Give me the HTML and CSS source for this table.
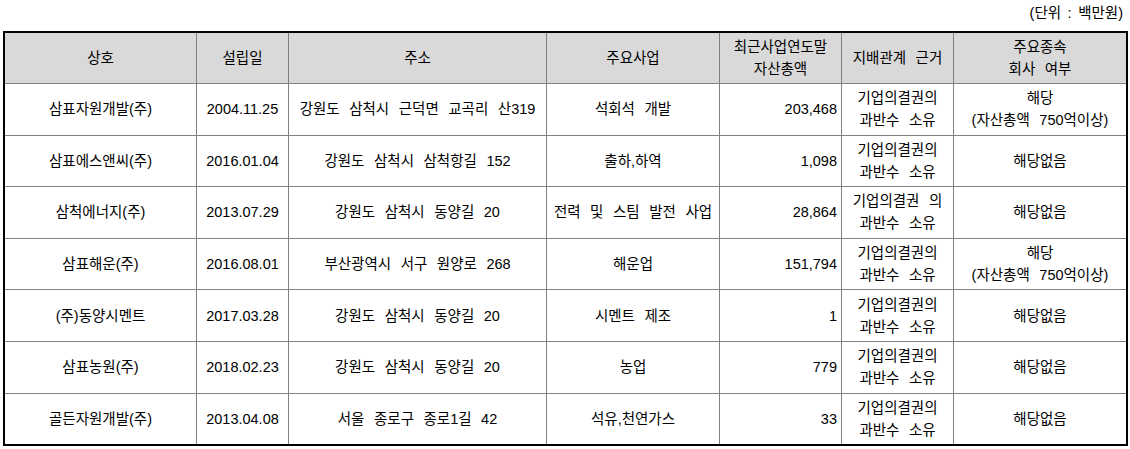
FILE: index.html
```html
<!DOCTYPE html>
<html lang="ko">
<head>
<meta charset="utf-8">
<title>종속회사 현황</title>
<link rel="stylesheet" href="styles.css">
</head>
<body>
<div class="page">
  <div class="unit">(단위 : 백만원)</div>
  <table class="grid">
    <thead>
      <tr class="head">
        <th class="c1">상호</th>
        <th class="c2">설립일</th>
        <th class="c3">주소</th>
        <th class="c4">주요사업</th>
        <th class="c5">최근사업연도말<br>자산총액</th>
        <th class="c6">지배관계 근거</th>
        <th class="c7">주요종속<br>회사 여부</th>
      </tr>
    </thead>
    <tbody>
      <tr>
        <td>삼표자원개발(주)</td>
        <td>2004.11.25</td>
        <td>강원도 삼척시 근덕면 교곡리 산319</td>
        <td>석회석 개발</td>
        <td class="num">203,468</td>
        <td>기업의결권의<br>과반수 소유</td>
        <td>해당<br>(자산총액 750억이상)</td>
      </tr>
      <tr>
        <td>삼표에스앤씨(주)</td>
        <td>2016.01.04</td>
        <td>강원도 삼척시 삼척항길 152</td>
        <td>출하,하역</td>
        <td class="num">1,098</td>
        <td>기업의결권의<br>과반수 소유</td>
        <td>해당없음</td>
      </tr>
      <tr>
        <td>삼척에너지(주)</td>
        <td>2013.07.29</td>
        <td>강원도 삼척시 동양길 20</td>
        <td>전력 및 스팀 발전 사업</td>
        <td class="num">28,864</td>
        <td>기업의결권 의<br>과반수 소유</td>
        <td>해당없음</td>
      </tr>
      <tr>
        <td>삼표해운(주)</td>
        <td>2016.08.01</td>
        <td>부산광역시 서구 원양로 268</td>
        <td>해운업</td>
        <td class="num">151,794</td>
        <td>기업의결권의<br>과반수 소유</td>
        <td>해당<br>(자산총액 750억이상)</td>
      </tr>
      <tr>
        <td>(주)동양시멘트</td>
        <td>2017.03.28</td>
        <td>강원도 삼척시 동양길 20</td>
        <td>시멘트 제조</td>
        <td class="num">1</td>
        <td>기업의결권의<br>과반수 소유</td>
        <td>해당없음</td>
      </tr>
      <tr>
        <td>삼표농원(주)</td>
        <td>2018.02.23</td>
        <td>강원도 삼척시 동양길 20</td>
        <td>농업</td>
        <td class="num">779</td>
        <td>기업의결권의<br>과반수 소유</td>
        <td>해당없음</td>
      </tr>
      <tr>
        <td>골든자원개발(주)</td>
        <td>2013.04.08</td>
        <td>서울 종로구 종로1길 42</td>
        <td>석유,천연가스</td>
        <td class="num">33</td>
        <td>기업의결권의<br>과반수 소유</td>
        <td>해당없음</td>
      </tr>
    </tbody>
  </table>
</div>
</body>
</html>
```

FILE: styles.css
```css
* {
  box-sizing: border-box;
}

body {
  margin: 0;
  background: #ffffff;
  color: #000000;
  font-family: "Liberation Sans", "Noto Sans CJK KR", sans-serif;
  font-size: 14.5px;
  font-weight: normal;
}

.page {
  width: 1130px;
  padding-left: 3px;
}

.unit {
  height: 31px;
  line-height: 27px;
  text-align: right;
  padding-right: 7px;
  word-spacing: 2.5px;
}

.grid {
  width: 1125px;
  table-layout: fixed;
  border-collapse: separate;
  border-spacing: 0;
  border: 2px solid #000000;
  word-spacing: 5.5px;
}

.grid th,
.grid td {
  padding: 0 4px;
  text-align: center;
  vertical-align: middle;
  line-height: 22px;
  font-weight: normal;
  border-right: 1px solid #808080;
  border-bottom: 1px solid #808080;
  white-space: nowrap;
}

.grid th:last-child,
.grid td:last-child {
  border-right: none;
}

.grid tbody tr:last-child td {
  border-bottom: none;
}

.head th {
  background: #d9d9d9;
  height: 51px;
}

.grid tbody td {
  height: 51.6px;
}

.grid tbody tr:last-child td {
  height: 50.6px;
}

.c1 { width: 192px; }
.c2 { width: 92px; }
.c3 { width: 258px; }
.c4 { width: 173px; }
.c5 { width: 122px; }
.c6 { width: 112px; }
.c7 { width: 172px; }

.grid td.num {
  text-align: right;
  padding-right: 4px;
}
```
